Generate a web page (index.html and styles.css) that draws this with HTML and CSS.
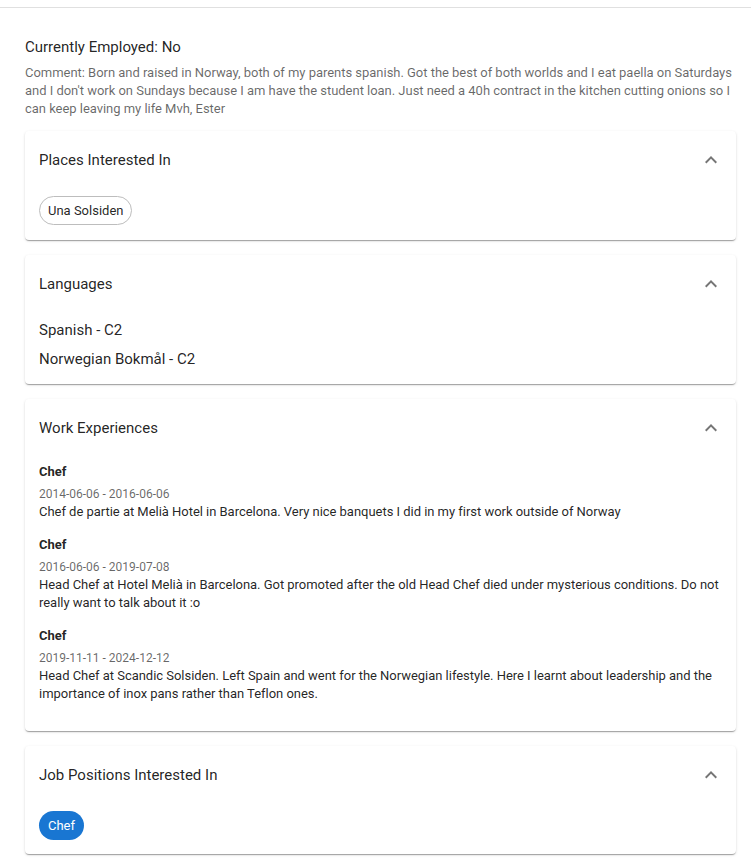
FILE: index.html
```html
<!DOCTYPE html>
<html lang="en">
<head>
<meta charset="utf-8">
<title>Profile</title>
<link rel="stylesheet" href="styles.css">
</head>
<body>
<div class="topbar"></div>
<main class="page">
  <div class="employed">Currently Employed: No</div>
  <p class="comment">Comment: Born and raised in Norway, both of my parents spanish. Got the best of both worlds and I eat paella on Saturdays and I don't work on Sundays because I am have the student loan. Just need a 40h contract in the kitchen cutting onions so I can keep leaving my life Mvh, Ester</p>

  <section class="card">
    <div class="summary">
      <span class="summary-title">Places Interested In</span>
      <svg class="chevron" viewBox="0 0 24 24" width="24" height="24"><path d="M12 8l-6 6 1.41 1.41L12 10.83l4.59 4.58L18 14z"/></svg>
    </div>
    <div class="details details-chips">
      <span class="chip chip-outlined">Una Solsiden</span>
    </div>
  </section>

  <section class="card">
    <div class="summary">
      <span class="summary-title">Languages</span>
      <svg class="chevron" viewBox="0 0 24 24" width="24" height="24"><path d="M12 8l-6 6 1.41 1.41L12 10.83l4.59 4.58L18 14z"/></svg>
    </div>
    <div class="details details-langs">
      <div class="lang">Spanish - C2</div>
      <div class="lang">Norwegian Bokmål - C2</div>
    </div>
  </section>

  <section class="card">
    <div class="summary">
      <span class="summary-title">Work Experiences</span>
      <svg class="chevron" viewBox="0 0 24 24" width="24" height="24"><path d="M12 8l-6 6 1.41 1.41L12 10.83l4.59 4.58L18 14z"/></svg>
    </div>
    <div class="details details-work">
      <div class="job">
        <div class="job-title">Chef</div>
        <div class="job-dates">2014-06-06 - 2016-06-06</div>
        <div class="job-desc">Chef de partie at Melià Hotel in Barcelona. Very nice banquets I did in my first work outside of Norway</div>
      </div>
      <div class="job">
        <div class="job-title">Chef</div>
        <div class="job-dates">2016-06-06 - 2019-07-08</div>
        <div class="job-desc">Head Chef at Hotel Melià in Barcelona. Got promoted after the old Head Chef died under mysterious conditions. Do not really want to talk about it :o</div>
      </div>
      <div class="job">
        <div class="job-title">Chef</div>
        <div class="job-dates">2019-11-11 - 2024-12-12</div>
        <div class="job-desc">Head Chef at Scandic Solsiden. Left Spain and went for the Norwegian lifestyle. Here I learnt about leadership and the importance of inox pans rather than Teflon ones.</div>
      </div>
    </div>
  </section>

  <section class="card">
    <div class="summary">
      <span class="summary-title">Job Positions Interested In</span>
      <svg class="chevron" viewBox="0 0 24 24" width="24" height="24"><path d="M12 8l-6 6 1.41 1.41L12 10.83l4.59 4.58L18 14z"/></svg>
    </div>
    <div class="details details-chips details-last">
      <span class="chip chip-filled">Chef</span>
    </div>
  </section>
</main>
</body>
</html>
```

FILE: styles.css
```css
* { box-sizing: border-box; }

html, body {
  margin: 0;
  padding: 0;
  background: #ffffff;
  font-family: Roboto, "Liberation Sans", Arial, sans-serif;
  color: rgba(0, 0, 0, 0.87);
}

.topbar {
  height: 8px;
  border-bottom: 1px solid #e0e0e0;
}

.page {
  padding: 27px 15px 0 25px;
}

.employed {
  font-size: 15px;
  line-height: 24px;
}

.comment {
  margin: 5px 0 13px;
  font-size: 13px;
  line-height: 18px;
  letter-spacing: -0.03px;
  color: rgba(0, 0, 0, 0.6);
}

.card {
  background: #fff;
  border-radius: 4px;
  box-shadow: 0px 2px 1px -1px rgba(0,0,0,0.2), 0px 1px 1px 0px rgba(0,0,0,0.14), 0px 1px 3px 0px rgba(0,0,0,0.12);
  margin-bottom: 15px;
}

.summary {
  height: 57px;
  display: flex;
  align-items: center;
  justify-content: space-between;
  padding: 0 13px 0 14px;
}

.summary-title {
  font-size: 15px;
  line-height: 24px;
}

.chevron {
  fill: rgba(0, 0, 0, 0.54);
}

.details {
  padding: 8px 14px 15px 14px;
}

.details-chips {
  display: flex;
  gap: 8px;
}

.details-last {
  padding-bottom: 14px;
}

.chip {
  display: inline-flex;
  align-items: center;
  height: 29px;
  border-radius: 15px;
  padding: 0 9px;
  font-size: 13px;
}

.chip-outlined {
  border: 1px solid #bdbdbd;
  padding: 0 8px;
  color: rgba(0, 0, 0, 0.87);
}

.chip-filled {
  background: #1976d2;
  color: #fff;
}

.details-langs {
  padding-top: 8px;
  padding-bottom: 14px;
  display: flex;
  flex-direction: column;
  gap: 8px;
}

.lang {
  font-size: 15px;
  line-height: 21px;
}

.details-work {
  padding-top: 6px;
  padding-bottom: 14px;
}

.job {
  margin-bottom: 14px;
}

.job-title {
  font-size: 13px;
  font-weight: 700;
  line-height: 20px;
  margin-bottom: 4px;
}

.job-dates {
  font-size: 12px;
  line-height: 17px;
  color: rgba(0, 0, 0, 0.6);
}

.job-desc {
  font-size: 13px;
  line-height: 18px;
  letter-spacing: -0.03px;
}
```
